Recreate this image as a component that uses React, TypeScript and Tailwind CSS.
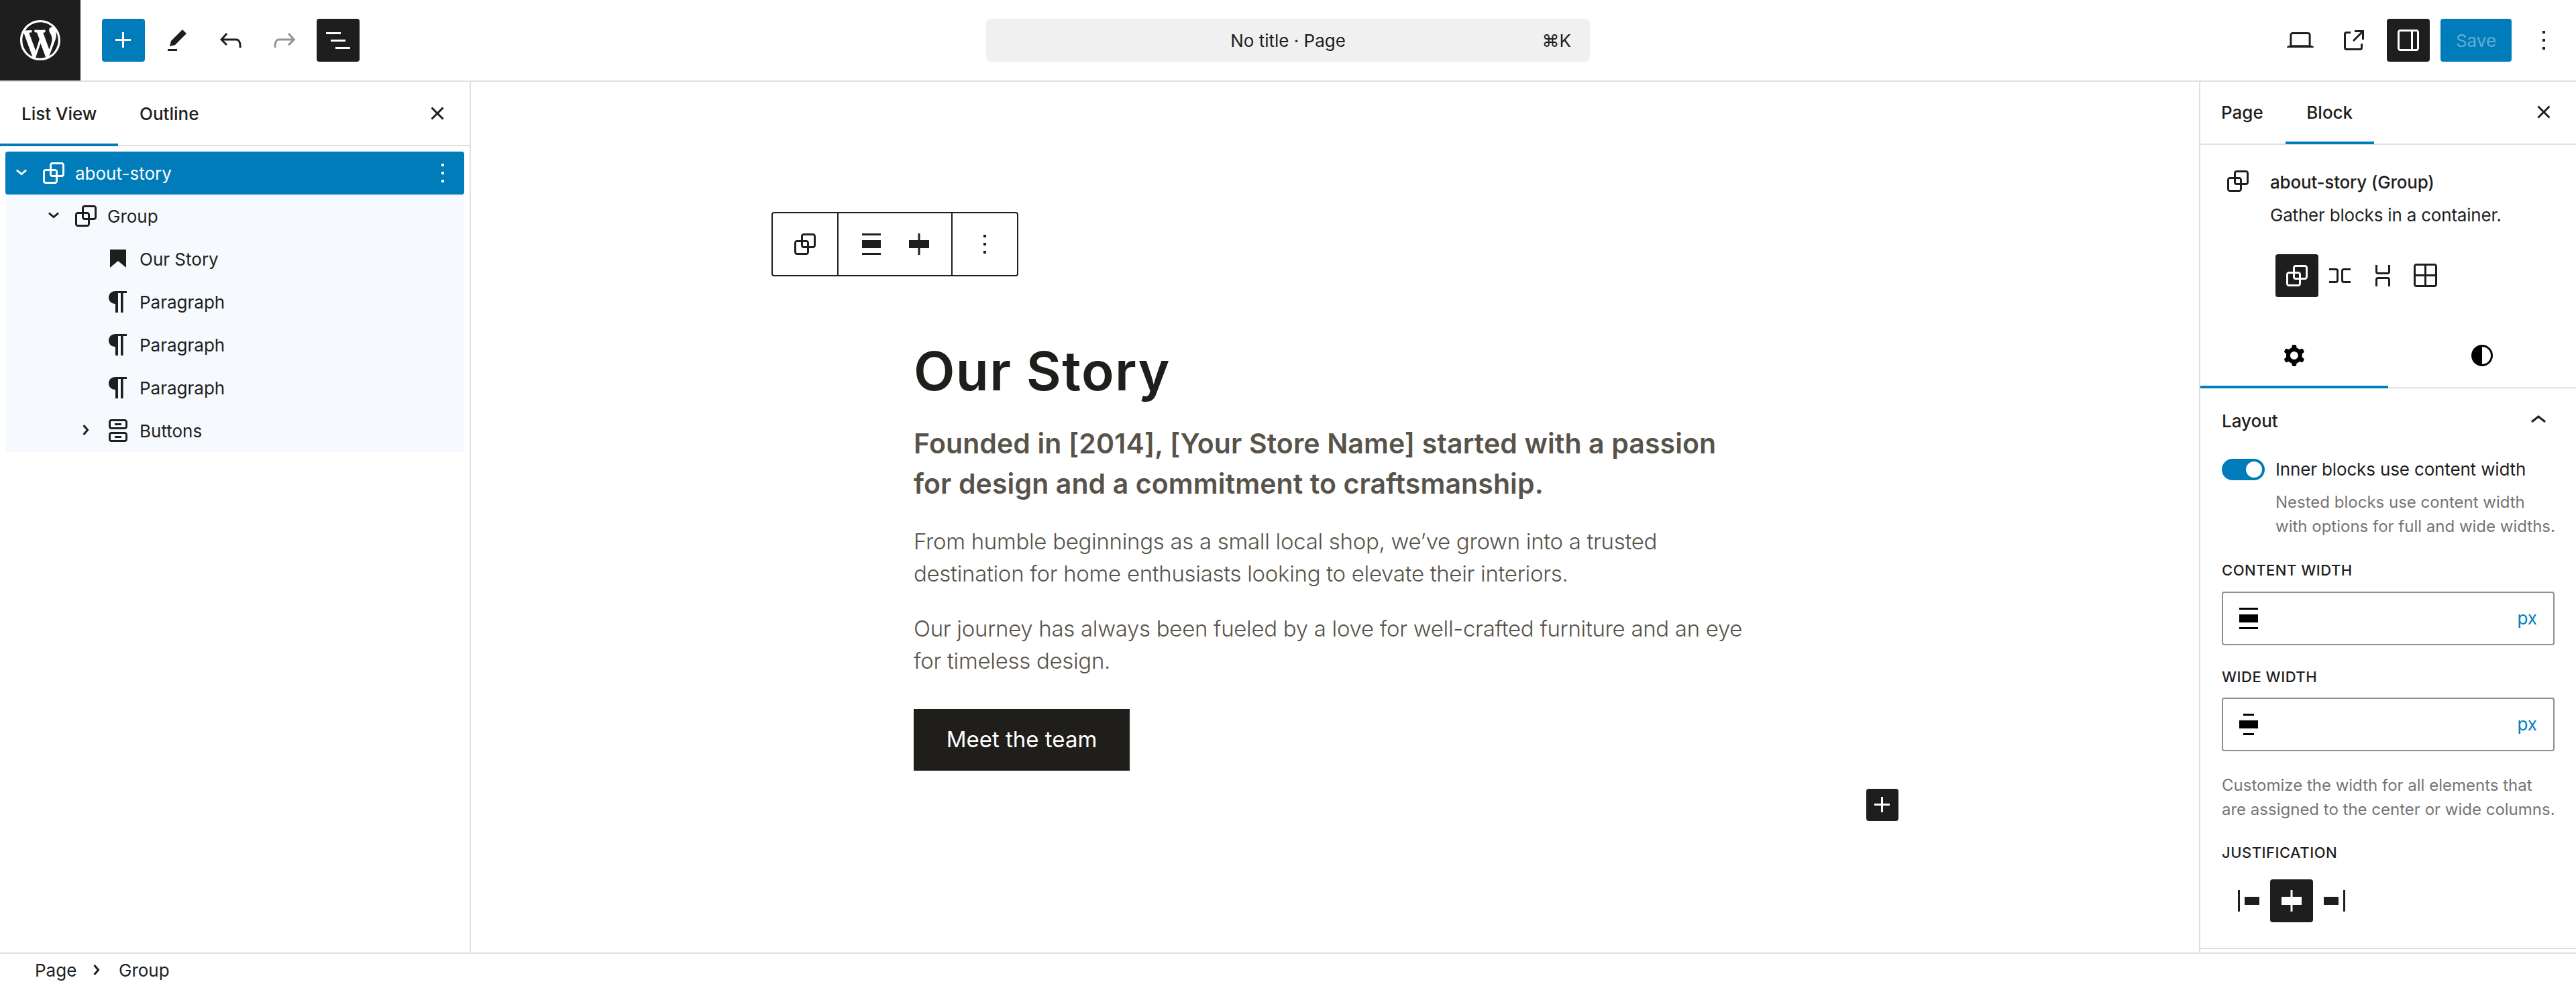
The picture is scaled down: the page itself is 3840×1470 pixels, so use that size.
import React from "react";

const P: React.FC<{ d: string; className?: string; size?: number; evenodd?: boolean }> = ({ d, className = "", size = 48, evenodd }) => (
  <svg viewBox="0 0 24 24" width={size} height={size} className={`shrink-0 fill-current ${className}`}>
    <path d={d} fillRule={evenodd ? "evenodd" : undefined} clipRule={evenodd ? "evenodd" : undefined} />
  </svg>
);

const I = {
  group: "M18 4h-7c-1.1 0-2 .9-2 2v3H6c-1.1 0-2 .9-2 2v7c0 1.1.9 2 2 2h7c1.1 0 2-.9 2-2v-3h3c1.1 0 2-.9 2-2V6c0-1.1-.9-2-2-2zm-4.5 14c0 .3-.2.5-.5.5H6c-.3 0-.5-.2-.5-.5v-7c0-.3.2-.5.5-.5h3V13c0 1.1.9 2 2 2h2.5v3zm0-4.5H11c-.3 0-.5-.2-.5-.5v-2.5H13c.3 0 .5.2.5.5v2.5zm5-.5c0 .3-.2.5-.5.5h-3V11c0-1.1-.9-2-2-2h-2.5V6c0-.3.2-.5.5-.5h7c.3 0 .5.2.5.5v7z",
  plus: "M11 12.5V17.5H12.5V12.5H17.5V11H12.5V6H11V11H6V12.5H11Z",
  edit: "m19 7-3-3-8.5 8.5-1 4 4-1L19 7Zm-7 11.5H5V20h7v-1.5Z",
  undo: "M18.3 11.7c-.6-.6-1.4-.9-2.3-.9H6.7l2.9-3.3-1.1-1-4.5 5L8.5 16l1-1-2.7-2.7H16c.5 0 .9.2 1.3.5 1 1 1 3.4 1 4.5v.3h1.5v-.2c0-1.5 0-4.3-1.5-5.7z",
  redo: "M15.6 6.5l-1.1 1 2.9 3.3H8c-.9 0-1.7.3-2.3.9-1.4 1.5-1.4 4.2-1.4 5.6v.2h1.5v-.3c0-1.1 0-3.5 1-4.5.3-.3.7-.5 1.3-.5h9.2L14.5 15l1.1 1.1 4.6-4.6-4.6-5z",
  list: "M3 6h11v1.5H3V6Zm3.5 5.5h11V13h-11v-1.5ZM21 17H10v1.5h11V17Z",
  close: "M12 13.06l3.712 3.713 1.061-1.06L13.061 12l3.712-3.712-1.06-1.06L12 10.938 8.288 7.227l-1.061 1.06L10.939 12l-3.712 3.712 1.06 1.061L12 13.061z",
  down: "m15.99 10.889-3.988 3.418-3.988-3.418.976-1.14 3.012 2.582 3.012-2.581.976 1.139Z",
  right: "M10.8622 8.04053L14.2805 12.0286L10.8622 16.0167L9.72327 15.0405L12.3049 12.0286L9.72327 9.01672L10.8622 8.04053Z",
  up: "M6.5 12.4L12 8l5.5 4.4-.9 1.2L12 10l-4.5 3.6-1-1.2z",
  more: "M13 19h-2v-2h2v2zm0-6h-2v-2h2v2zm0-6h-2V5h2v2z",
  bookmark: "M6 5h12v13.5l-6-5-6 5z",
  para: "M18.5 4H10C7 4 5 6.2 5 8.8s2 4.7 5 4.7V20h2V5.5h2V20h1.8V5.5h2.7V4z",
  buttons: "M14.5 17.5H9.5V16H14.5V17.5Z M14.5 8H9.5V6.5H14.5V8Z M7 3.5H17C18.1 3.5 19 4.4 19 5.5V9C19 10.1 18.1 11 17 11H7C5.9 11 5 10.1 5 9V5.5C5 4.4 5.9 3.5 7 3.5ZM17 5H7C6.7 5 6.5 5.2 6.5 5.5V9C6.5 9.3 6.7 9.5 7 9.5H17C17.3 9.5 17.5 9.3 17.5 9V5.5C17.5 5.2 17.3 5 17 5Z M7 13H17C18.1 13 19 13.9 19 15V18.5C19 19.6 18.1 20.5 17 20.5H7C5.9 20.5 5 19.6 5 18.5V15C5 13.9 5.9 13 7 13ZM17 14.5H7C6.7 14.5 6.5 14.7 6.5 15V18.5C6.5 18.8 6.7 19 7 19H17C17.3 19 17.5 18.8 17.5 18.5V15C17.5 14.7 17.3 14.5 17 14.5Z",
  wide: "M5 4h14v1.5H5zM5 9h14v6H5zM5 18.5h14V20H5z",
  wideNarrow: "M8 4h8v1.5H8zM5 9h14v6H5zM8 18.5h8V20H8z",
  center: "M4.5 9h6.75V4h1.5v5h6.75v6h-6.75v5h-1.5v-5H4.5z",
  jLeft: "M4 4h1.5v16H4zM9 9h11v6H9z",
  jRight: "M18.5 4H20v16h-1.5zM4 9h11v6H4z",
  row: "M4 6.5h5a2 2 0 0 1 2 2v7a2 2 0 0 1-2 2H4V16h5a.5.5 0 0 0 .5-.5v-7A.5.5 0 0 0 9 8H4V6.5Zm16 0h-5a2 2 0 0 0-2 2v7a2 2 0 0 0 2 2h5V16h-5a.5.5 0 0 1-.5-.5v-7A.5.5 0 0 1 15 8h5V6.5Z",
  stack: "M17.5 4v5a2 2 0 0 1-2 2h-7a2 2 0 0 1-2-2V4H8v5a.5.5 0 0 0 .5.5h7A.5.5 0 0 0 16 9V4h1.5Zm0 16v-5a2 2 0 0 0-2-2h-7a2 2 0 0 0-2 2v5H8v-5a.5.5 0 0 1 .5-.5h7a.5.5 0 0 1 .5.5v5h1.5Z",
  grid: "m3 5c0-1.10457.89543-2 2-2h13.5c1.1046 0 2 .89543 2 2v13.5c0 1.1046-.8954 2-2 2h-13.5c-1.10457 0-2-.8954-2-2zm2-.5h6v6.5h-6.5v-6c0-.27614.22386-.5.5-.5zm-.5 8v6c0 .2761.22386.5.5.5h6v-6.5zm8 0v6.5h6c.2761 0 .5-.2239.5-.5v-6zm0-8v6.5h6.5v-6c0-.27614-.2239-.5-.5-.5z",
  cog: "M10.289 4.836A1 1 0 0 1 11.275 4h1.306a1 1 0 0 1 .987.836l.244 1.466c.787.26 1.503.679 2.108 1.218l1.393-.522a1 1 0 0 1 1.216.437l.653 1.13a1 1 0 0 1-.23 1.273l-1.148.944a6.025 6.025 0 0 1 0 2.435l1.149.946a1 1 0 0 1 .23 1.272l-.653 1.13a1 1 0 0 1-1.216.437l-1.394-.522c-.605.54-1.32.958-2.108 1.218l-.244 1.466a1 1 0 0 1-.987.836h-1.306a1 1 0 0 1-.986-.836l-.244-1.466a5.995 5.995 0 0 1-2.108-1.218l-1.394.522a1 1 0 0 1-1.217-.436l-.653-1.131a1 1 0 0 1 .23-1.272l1.149-.946a6.026 6.026 0 0 1 0-2.435l-1.148-.944a1 1 0 0 1-.23-1.272l.653-1.131a1 1 0 0 1 1.217-.437l1.393.522a5.994 5.994 0 0 1 2.108-1.218l.244-1.466ZM14.929 12a3 3 0 1 1-6 0 3 3 0 0 1 6 0Z",
  half: "M12 4a8 8 0 1 0 0 16 8 8 0 0 0 0-16Zm0 14.5V5.5a6.5 6.5 0 0 1 0 13Z",
  laptop: "M20.5 16h-.7V8c0-1.1-.9-2-2-2H6.2c-1.1 0-2 .9-2 2v8h-.7c-.8 0-1.5.7-1.5 1.5h20c0-.8-.7-1.5-1.5-1.5zM5.7 8c0-.3.2-.5.5-.5h11.6c.3 0 .5.2.5.5v7.6H5.7V8z",
  external: "M19.5 4.5h-7V6h4.44l-5.97 5.97 1.06 1.06L18 7.06v4.44h1.5v-7Zm-13 1a2 2 0 0 0-2 2v10a2 2 0 0 0 2 2h10a2 2 0 0 0 2-2v-3H17v3a.5.5 0 0 1-.5.5h-10a.5.5 0 0 1-.5-.5v-10a.5.5 0 0 1 .5-.5h3V5.5h-3Z",
  drawer: "M18 4H6c-1.1 0-2 .9-2 2v12c0 1.1.9 2 2 2h12c1.1 0 2-.9 2-2V6c0-1.1-.9-2-2-2zm-4 14.5H6c-.3 0-.5-.2-.5-.5V6c0-.3.2-.5.5-.5h8v13zm4.5-.5c0 .3-.2.5-.5.5h-2.5v-13H18c.3 0 .5.2.5.5v12z",
};

const WP = () => (
  <svg viewBox="0 0 20 20" width={60} height={60} className="fill-white">
    <path d="M20 10c0-5.51-4.49-10-10-10C4.48 0 0 4.49 0 10c0 5.52 4.48 10 10 10 5.51 0 10-4.48 10-10zM7.78 15.37L4.37 6.22c.55-.02 1.17-.08 1.17-.08.5-.06.44-1.13-.06-1.11 0 0-1.45.11-2.37.11-.18 0-.37 0-.58-.01C4.12 2.69 6.87 1.11 10 1.11c2.33 0 4.45.87 6.05 2.34-.68-.11-1.65.39-1.65 1.58 0 .74.45 1.36.9 2.1.35.61.55 1.36.55 2.46 0 1.49-1.4 5-1.4 5l-3.03-8.37c.54-.02.82-.17.82-.17.5-.05.44-1.25-.06-1.22 0 0-1.44.12-2.38.12-.87 0-2.33-.12-2.33-.12-.5-.03-.56 1.2-.06 1.22l.92.08 1.26 3.41zM17.41 10c.24-.64.74-1.87.43-4.25.7 1.29 1.05 2.71 1.05 4.25 0 3.29-1.73 6.24-4.4 7.78.97-2.59 1.94-5.2 2.92-7.78zM6.1 18.09C3.12 16.65 1.11 13.53 1.11 10c0-1.3.23-2.48.72-3.59C3.25 10.3 4.67 14.2 6.1 18.09zm4.03-6.63l2.58 6.98c-.86.29-1.76.45-2.71.45-.79 0-1.57-.11-2.29-.33.81-2.38 1.62-4.74 2.42-7.1z" />
  </svg>
);

const Btn: React.FC<{ d: string; className?: string; evenodd?: boolean }> = ({ d, className = "", evenodd }) => (
  <div className={`flex h-[64px] w-[64px] shrink-0 items-center justify-center rounded-[4px] ${className}`}>
    <P d={d} evenodd={evenodd} />
  </div>
);

const Row: React.FC<{ depth: number; chevron?: "down" | "right"; icon: string; label: string; selected?: boolean }> = ({ depth, chevron, icon, label, selected }) => (
  <div className={`flex h-[64px] items-center rounded-[4px] ${selected ? "bg-[#007cba] text-white" : ""}`}>
    <div className="shrink-0" style={{ width: depth * 48 }} />
    <div className="flex w-[48px] shrink-0 justify-center">
      {chevron && <P d={chevron === "down" ? I.down : I.right} className="-translate-y-px" />}
    </div>
    <div className="flex w-[48px] shrink-0 justify-center"><P d={icon} /></div>
    <span className="ml-[8px] flex-1 translate-y-px text-[26px] leading-[32px]">{label}</span>
    {selected && <div className="mr-[8px] flex w-[48px] justify-center"><P d={I.more} /></div>}
  </div>
);

const Help: React.FC<{ lines: string[]; className?: string }> = ({ lines, className = "" }) => (
  <p className={`text-[24px] leading-[36px] text-[#757575] ${className}`}>
    {lines.map((l) => <span key={l} className="block whitespace-nowrap">{l}</span>)}
  </p>
);

const Caps: React.FC<{ children: React.ReactNode; className?: string }> = ({ children, className = "" }) => (
  <div className={`text-[22px] font-[450] uppercase leading-[32px] tracking-[0.5px] ${className}`}>{children}</div>
);

const UnitInput: React.FC<{ icon: string; className?: string }> = ({ icon, className = "" }) => (
  <div className={`flex h-[80px] w-[496px] items-center rounded-[4px] border-2 border-[#8f8f8f] pl-[14px] pr-[24px] ${className}`}>
    <P d={icon} className="mr-auto text-black" />
    <span className="text-[26px] leading-[32px] text-[#007cba]">px</span>
  </div>
);

export default function App() {
  return (
    <div className="flex h-[1470px] w-[3840px] flex-col overflow-hidden bg-white text-[#1e1e1e] [font-family:Inter,'Noto_Sans',sans-serif]">
      {/* Top bar */}
      <header className="relative flex h-[122px] shrink-0 items-center border-b-2 border-[#e0e0e0] pr-[16px]">
        <div className="flex h-[120px] w-[120px] items-center justify-center bg-[#1e1e1e]"><WP /></div>
        <div className="ml-[32px] flex items-center gap-[16px]">
          <Btn d={I.plus} className="bg-[#007cba] text-white" />
          <Btn d={I.edit} />
          <Btn d={I.undo} />
          <Btn d={I.redo} className="text-[#949494]" />
          <Btn d={I.list} className="bg-[#1e1e1e] text-white" />
        </div>
        <div className="absolute left-[1470px] top-[28px] flex h-[64px] w-[900px] items-center justify-center rounded-[8px] bg-[#f0f0f0] text-[26px]">
          <span>No title · Page</span>
          <span className="absolute right-[28px]">⌘K</span>
        </div>
        <div className="ml-auto flex items-center">
          <Btn d={I.laptop} className="mr-[16px]" />
          <Btn d={I.external} className="mr-[17px]" />
          <div className="flex h-[64px] w-[64px] items-center justify-center rounded-[4px] bg-[#1e1e1e] text-white"><P d={I.drawer} evenodd /></div>
          <div className="ml-[16px] mr-[16px] flex h-[64px] w-[106px] items-center justify-center rounded-[4px] bg-[#007cba] text-[26px] text-white/40">Save</div>
          <Btn d={I.more} />
        </div>
      </header>

      <div className="flex min-h-0 flex-1">
        {/* List view */}
        <aside className="flex w-[702px] shrink-0 flex-col border-r-2 border-[#e0e0e0]">
          <div className="relative flex h-[96px] items-center border-b-2 border-[#e0e0e0]">
            <div className="relative flex h-full w-[176px] items-center pl-[32px] text-[26px] font-[450]">
              List View
              <div className="absolute bottom-[-2px] left-0 h-[4px] w-full bg-[#007cba]" />
            </div>
            <div className="ml-[32px] text-[26px] font-[450]">Outline</div>
            <P d={I.close} className="ml-auto mr-[24px]" />
          </div>
          <div className="mx-[8px] mt-[8px] rounded-[4px] bg-[#f6f9fd]">
            <Row depth={0} chevron="down" icon={I.group} label="about-story" selected />
            <Row depth={1} chevron="down" icon={I.group} label="Group" />
            <Row depth={2} icon={I.bookmark} label="Our Story" />
            <Row depth={2} icon={I.para} label="Paragraph" />
            <Row depth={2} icon={I.para} label="Paragraph" />
            <Row depth={2} icon={I.para} label="Paragraph" />
            <Row depth={2} chevron="right" icon={I.buttons} label="Buttons" />
          </div>
        </aside>

        {/* Canvas */}
        <main className="relative min-w-0 flex-1">
          <div className="absolute left-[448px] top-[194px] flex h-[96px] items-stretch rounded-[4px] border-2 border-[#1e1e1e] bg-white">
            <div className="flex w-[98px] items-center justify-center border-r-2 border-[#1e1e1e]"><P d={I.group} /></div>
            <div className="flex w-[170px] items-center justify-center gap-[23px] border-r-2 border-[#1e1e1e]">
              <P d={I.wide} />
              <P d={I.center} />
            </div>
            <div className="flex w-[96px] items-center justify-center"><P d={I.more} /></div>
          </div>

          <article className="mx-auto w-[1256px] pt-[383px] text-[#57534a]">
            <h1 className="text-[80px] font-semibold leading-[96px] tracking-[1.35px] text-[#1f1e1b]">Our Story</h1>
            <p className="mt-[30px] whitespace-nowrap text-[41px] font-semibold leading-[60px] tracking-[0.1px]">
              Founded in [2014], [Your Store Name] started with a passion<br />for design and a commitment to craftsmanship.
            </p>
            <p className="mt-[32px] whitespace-nowrap text-[33px] font-light leading-[48px] tracking-[-0.31px]">
              From humble beginnings as a small local shop, we’ve grown into a trusted<br />destination for home enthusiasts looking to elevate their interiors.
            </p>
            <p className="mt-[34px] whitespace-nowrap text-[33px] font-light leading-[48px] tracking-[-0.31px]">
              Our journey has always been fueled by a love for well-crafted furniture and an eye<br />for timeless design.
            </p>
            <div className="mt-[48px] flex h-[92px] w-[322px] items-center justify-center bg-[#1f1e1b] text-[33px] text-white">Meet the team</div>
          </article>

          <div className="absolute left-[2080px] top-[1054px] flex h-[48px] w-[48px] items-center justify-center rounded-[4px] bg-[#1e1e1e] text-white"><P d={I.plus} /></div>
        </main>

        {/* Settings */}
        <aside className="flex w-[562px] shrink-0 flex-col border-l-2 border-[#e0e0e0]">
          <div className="relative flex h-[94px] shrink-0 items-center border-b-2 border-[#e0e0e0] pb-[2px] text-[26px] font-[450]">
            <span className="ml-[31px]">Page</span>
            <div className="relative ml-[33px] flex h-[92px] w-[132px] items-center justify-center">
              Block
              <div className="absolute bottom-[-2px] left-0 h-[4px] w-full bg-[#007cba]" />
            </div>
            <P d={I.close} className="ml-auto mr-[24px]" />
          </div>

          <div className="flex shrink-0 pl-[32px] pt-[36px]">
            <P d={I.group} className="mt-[-6px]" />
            <div className="ml-[24px] tracking-[-0.2px]">
              <div className="text-[26px] font-[450] leading-[40px]">about-story (Group)</div>
              <div className="mt-[9px] text-[26px] leading-[40px]">Gather blocks in a container.</div>
            </div>
          </div>

          <div className="ml-[112px] mt-[38px] flex shrink-0">
            <Btn d={I.group} className="bg-[#1e1e1e] text-white" />
            <Btn d={I.row} />
            <Btn d={I.stack} />
            <Btn d={I.grid} evenodd />
          </div>

          <div className="mt-[40px] flex h-[96px] shrink-0 items-center border-b-2 border-[#e0e0e0]">
            <div className="relative flex h-full w-[280px] items-center justify-center text-black">
              <P d={I.cog} evenodd />
              <div className="absolute bottom-[-2px] left-0 h-[4px] w-full bg-[#007cba]" />
            </div>
            <div className="flex h-full w-[280px] items-center justify-center text-black"><P d={I.half} evenodd /></div>
          </div>

          <div className="flex-1 border-b-2 border-[#e0e0e0] pl-[32px]">
            <div className="mt-[24px] flex h-[48px] items-center justify-between pr-[32px]">
              <span className="text-[26px] font-[450]">Layout</span>
              <P d={I.up} />
            </div>
            <div className="mt-[31px] flex items-center">
              <div className="flex h-[32px] w-[64px] items-center justify-end rounded-full bg-[#007cba] pr-[4px]">
                <div className="h-[24px] w-[24px] rounded-full bg-white" />
              </div>
              <span className="ml-[16px] text-[26px] leading-[36px] tracking-[-0.15px]">Inner blocks use content width</span>
            </div>
            <Help className="ml-[80px] mt-[13px]" lines={["Nested blocks use content width", "with options for full and wide widths."]} />
            <Caps className="mt-[31px]">Content width</Caps>
            <UnitInput icon={I.wide} className="mt-[16px]" />
            <Caps className="mt-[31px]">Wide width</Caps>
            <UnitInput icon={I.wideNarrow} className="mt-[15px]" />
            <Help className="mt-[33px]" lines={["Customize the width for all elements that", "are assigned to the center or wide columns."]} />
            <Caps className="mt-[30px]">Justification</Caps>
            <div className="ml-[8px] mt-[24px] flex">
              <Btn d={I.jLeft} />
              <Btn d={I.center} className="bg-[#1e1e1e] text-white" />
              <Btn d={I.jRight} />
            </div>
          </div>
          <div className="h-[5px] shrink-0" />
        </aside>
      </div>

      {/* Breadcrumb */}
      <footer className="flex h-[50px] shrink-0 items-center border-t-2 border-[#e0e0e0] text-[26px]">
        <span className="ml-[52px] w-[59px]">Page</span>
        <P d={I.right} className="ml-[9px]" />
        <span className="ml-[9px]">Group</span>
      </footer>
    </div>
  );
}
